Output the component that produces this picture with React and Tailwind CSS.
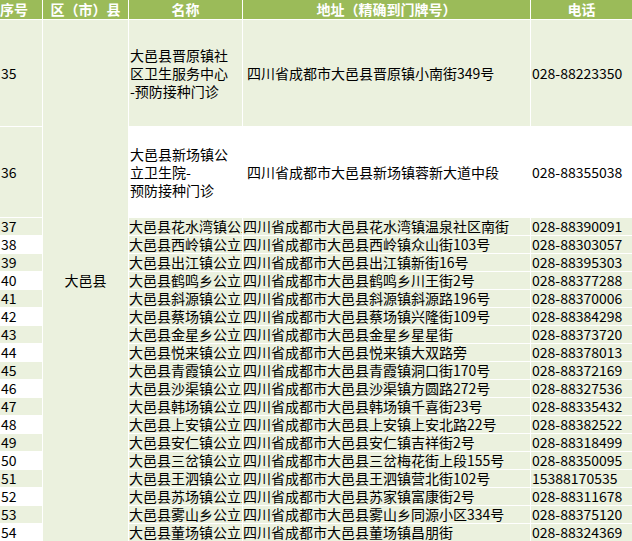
const rows = [
  ["37","大邑县花水湾镇公立卫生院","四川省成都市大邑县花水湾镇温泉社区南街","028-88390091"],
  ["38","大邑县西岭镇公立卫生院","四川省成都市大邑县西岭镇众山街103号","028-88303057"],
  ["39","大邑县出江镇公立卫生院","四川省成都市大邑县出江镇新街16号","028-88395303"],
  ["40","大邑县鹤鸣乡公立卫生院","四川省成都市大邑县鹤鸣乡川王街2号","028-88377288"],
  ["41","大邑县斜源镇公立卫生院","四川省成都市大邑县斜源镇斜源路196号","028-88370006"],
  ["42","大邑县蔡场镇公立卫生院","四川省成都市大邑县蔡场镇兴隆街109号","028-88384298"],
  ["43","大邑县金星乡公立卫生院","四川省成都市大邑县金星乡星星街","028-88373720"],
  ["44","大邑县悦来镇公立卫生院","四川省成都市大邑县悦来镇大双路旁","028-88378013"],
  ["45","大邑县青霞镇公立卫生院","四川省成都市大邑县青霞镇洞口街170号","028-88372169"],
  ["46","大邑县沙渠镇公立卫生院","四川省成都市大邑县沙渠镇方圆路272号","028-88327536"],
  ["47","大邑县韩场镇公立卫生院","四川省成都市大邑县韩场镇千喜街23号","028-88335432"],
  ["48","大邑县上安镇公立卫生院","四川省成都市大邑县上安镇上安北路22号","028-88382522"],
  ["49","大邑县安仁镇公立卫生院","四川省成都市大邑县安仁镇吉祥街2号","028-88318499"],
  ["50","大邑县三岔镇公立卫生院","四川省成都市大邑县三岔梅花街上段155号","028-88350095"],
  ["51","大邑县王泗镇公立卫生院","四川省成都市大邑县王泗镇营北街102号","15388170535"],
  ["52","大邑县苏场镇公立卫生院","四川省成都市大邑县苏家镇富康街2号","028-88311678"],
  ["53","大邑县雾山乡公立卫生院","四川省成都市大邑县雾山乡同源小区334号","028-88375120"],
  ["54","大邑县董场镇公立卫生院","四川省成都市大邑县董场镇昌朋街","028-88324369"],
];
const f = { fontFamily: '"Noto Sans CJK SC","Liberation Sans",sans-serif' };
const B = "bg-[#ebf1de]";
export default function App() {
  return (
    <div className="w-[632px] h-[541px] overflow-hidden bg-white text-[14px] text-black" style={f}>
      <div className="grid grid-cols-[42px_85px_113px_287px_101px] grid-rows-[19px_106px_90px_repeat(18,17px)] gap-px bg-white">
        {["序号","区（市）县","名称","地址（精确到门牌号）","电话"].map((h,i)=>(
          <div key={i} className={`bg-[#9bbb59] text-white font-bold text-[14px] leading-[19px] whitespace-nowrap overflow-hidden ${i===0?"pl-0":"text-center"}`}>{h}</div>
        ))}
        <div className={`${B} flex items-center pl-px`}>35</div>
        <div className={`${B} flex items-center justify-center`} style={{gridRow:"2 / span 20",gridColumn:2}}>大邑县</div>
        <div className={`${B} flex items-center pl-px leading-[18px] overflow-hidden whitespace-nowrap`}><div>大邑县晋原镇社<br/>区卫生服务中心<br/>-预防接种门诊</div></div>
        <div className={`${B} flex items-center pl-1 whitespace-nowrap overflow-hidden`}>四川省成都市大邑县晋原镇小南街349号</div>
        <div className={`${B} flex items-center pl-px whitespace-nowrap overflow-hidden`}>028-88223350</div>

        <div className={`${B} flex items-center pl-px`}>36</div>
        <div className="bg-white flex items-center pl-px leading-[18px] overflow-hidden whitespace-nowrap"><div>大邑县新场镇公<br/>立卫生院-<br/>预防接种门诊</div></div>
        <div className="bg-white flex items-center pl-1 whitespace-nowrap overflow-hidden">四川省成都市大邑县新场镇蓉新大道中段</div>
        <div className="bg-white flex items-center pl-px whitespace-nowrap overflow-hidden">028-88355038</div>

        {rows.map((r,i)=>(
          [
            <div key={r[0]+"a"} className={`${i%2?"bg-white":B} pl-px leading-[17px] overflow-hidden`}>{r[0]}</div>,
            <div key={r[0]+"b"} className={`${B} leading-[17px] whitespace-nowrap overflow-hidden`}>{r[1]}</div>,
            <div key={r[0]+"c"} className={`${B} leading-[17px] whitespace-nowrap overflow-hidden`}>{r[2]}</div>,
            <div key={r[0]+"d"} className={`${B} leading-[17px] whitespace-nowrap overflow-hidden pl-px`}>{r[3]}</div>,
          ]
        ))}
      </div>
    </div>
  );
}
